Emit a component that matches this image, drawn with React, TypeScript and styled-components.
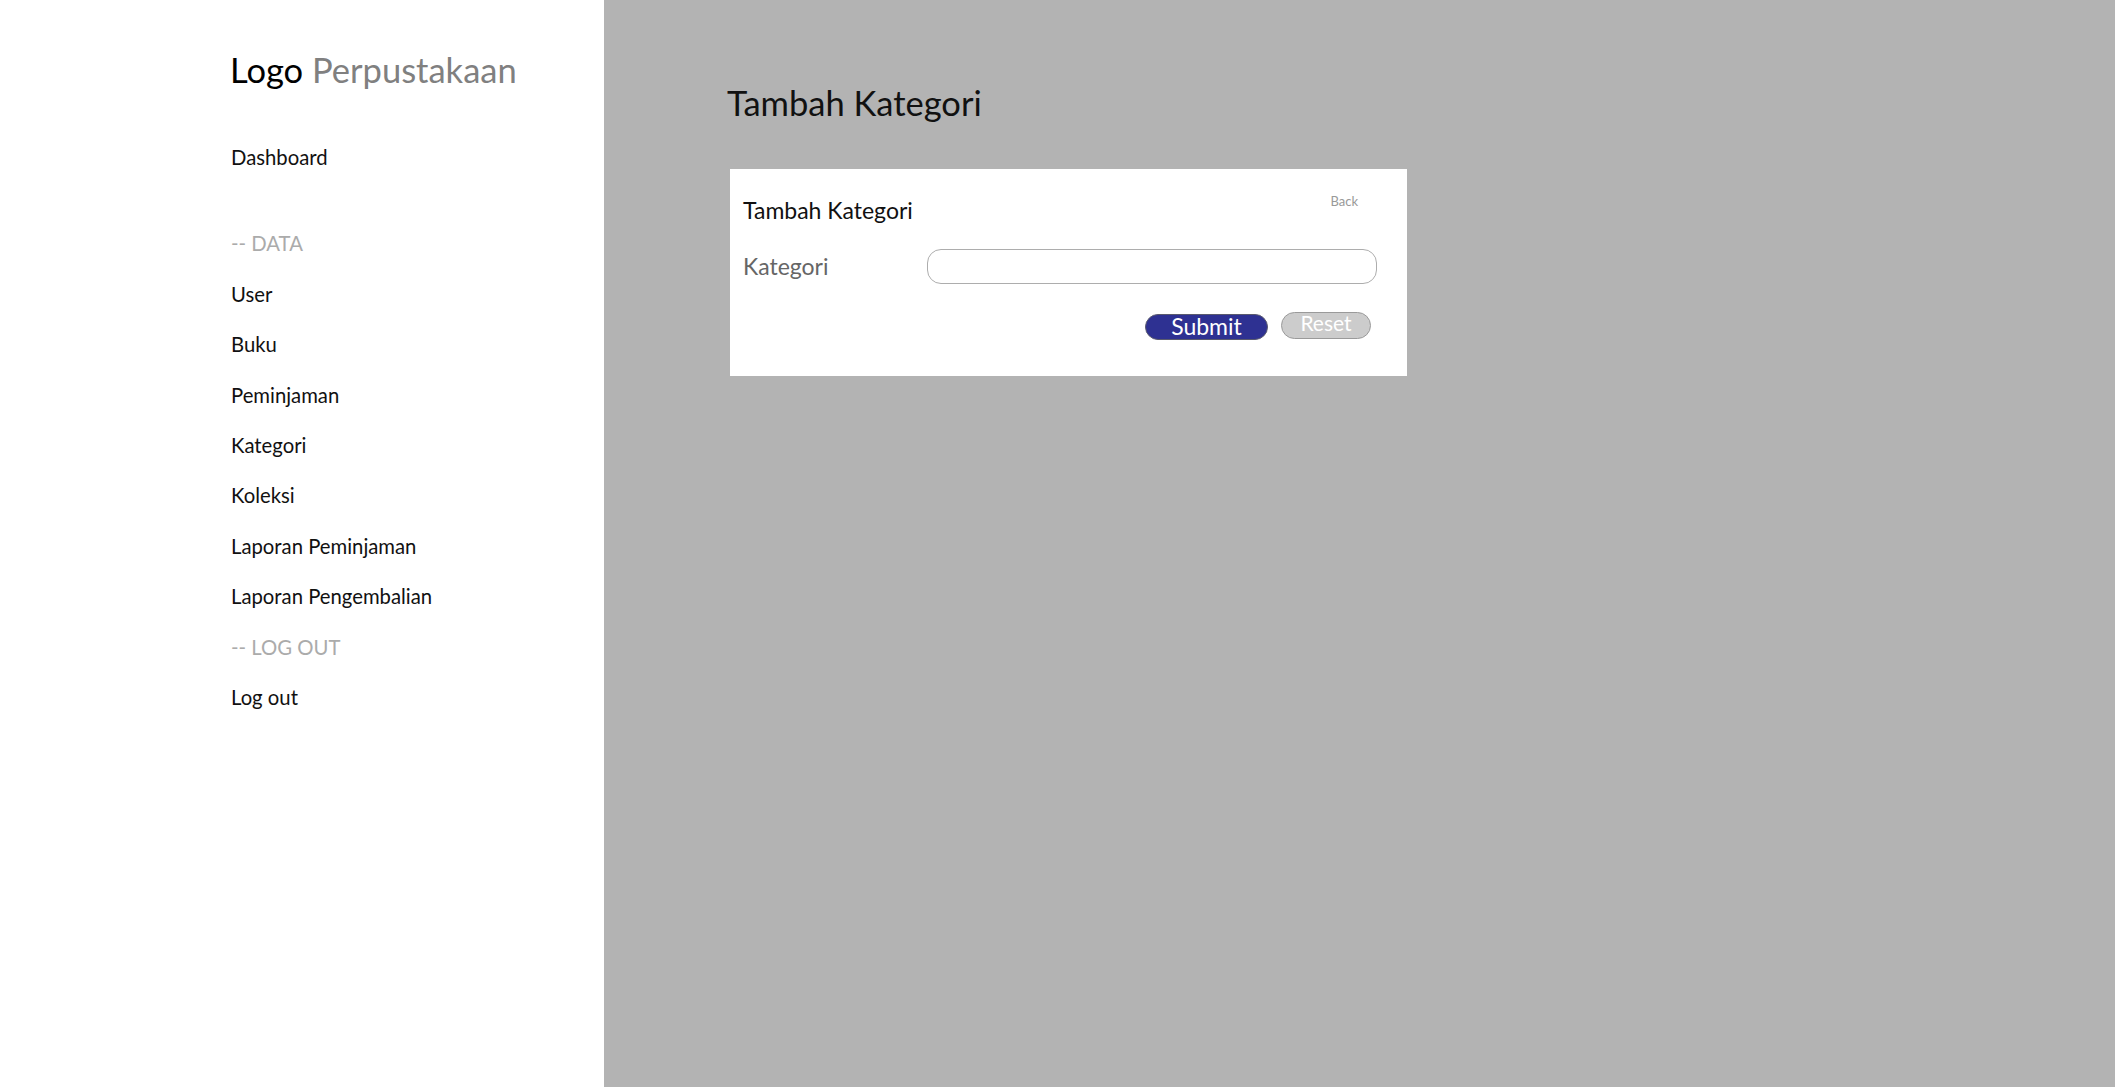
import React from "react";
import styled, { createGlobalStyle } from "styled-components";

const GlobalStyle = createGlobalStyle`
  html, body {
    margin: 0;
    padding: 0;
  }
  body {
    font-family: Lato, "Open Sans", sans-serif;
    color: #111;
  }
  * {
    box-sizing: border-box;
  }
`;

const Layout = styled.div`
  display: flex;
  min-height: 100vh;
`;

const Sidebar = styled.aside`
  width: 604px;
  flex: none;
  background: #fff;
  padding: 50px 0 0 231px;
  display: flex;
  flex-direction: column;
`;

const Logo = styled.div`
  font-size: 34.5px;
  line-height: 1.2;
  color: #000;
  margin: -1px 0 55px -1px;
  white-space: nowrap;

  span {
    color: #808080;
  }
`;

const NavList = styled.nav`
  display: flex;
  flex-direction: column;
  gap: 26.4px;
`;

const NavItem = styled.a<{ $spaced?: boolean }>`
  display: block;
  font-size: 20.3px;
  line-height: 24px;
  color: #111;
  text-decoration: none;
  cursor: pointer;
  margin-bottom: ${(p) => (p.$spaced ? "35.6px" : "0")};
`;

const NavHeading = styled.div`
  font-size: 20.3px;
  line-height: 24px;
  color: #ababab;
`;

const Main = styled.main`
  flex: 1;
  background: #b3b3b3;
  padding: 82px 0 0 123px;
`;

const PageTitle = styled.h1`
  margin: 0 0 46px;
  font-size: 34.5px;
  line-height: 1.2;
  font-weight: 400;
  color: #111;
`;

const Card = styled.section`
  width: 677px;
  height: 207px;
  margin-left: 3px;
  background: #fff;
  padding: 25px 30px 0 13px;
`;

const CardHeader = styled.div`
  display: flex;
  justify-content: space-between;
  align-items: flex-start;
`;

const CardTitle = styled.h2`
  margin: 3px 0 0;
  font-size: 23px;
  line-height: 1.2;
  font-weight: 400;
  color: #111;
`;

const BackLink = styled.a`
  font-size: 13px;
  line-height: 1.2;
  color: #999;
  margin-right: 19px;
  text-decoration: none;
  cursor: pointer;
`;

const FieldRow = styled.div`
  display: flex;
  align-items: center;
  margin-top: 24px;
`;

const Label = styled.label`
  width: 184px;
  flex: none;
  font-size: 23px;
  line-height: 1.2;
  color: #666;
`;

const TextInput = styled.input`
  width: 450px;
  height: 35px;
  flex: none;
  border: 1px solid #adadad;
  border-radius: 14px;
  background: #fff;
  outline: none;
  padding: 0 12px;
  font-family: inherit;
  font-size: 18px;
`;

const Actions = styled.div`
  display: flex;
  justify-content: flex-end;
  align-items: flex-start;
  gap: 13px;
  margin-top: 28px;
  margin-right: 6px;
`;

const Button = styled.button<{ $variant: "primary" | "muted" }>`
  font-family: inherit;
  color: #fff;
  cursor: pointer;
  text-align: center;
  border-radius: 14px;
  ${(p) =>
    p.$variant === "primary"
      ? `
    width: 123px;
    height: 26px;
    margin-top: 2px;
    background: #2e3192;
    border: 1px solid #5a5a6e;
    font-size: 23px;
    line-height: 22px;
    padding: 0 0 2px;
  `
      : `
    width: 90px;
    height: 27px;
    background: #cccccc;
    border: 1px solid #9a9a9a;
    font-size: 21px;
    line-height: 20px;
    padding: 0 0 5px;
  `}
`;

const navItems = [
  "User",
  "Buku",
  "Peminjaman",
  "Kategori",
  "Koleksi",
  "Laporan Peminjaman",
  "Laporan Pengembalian",
];

const App: React.FC = () => {
  return (
    <Layout>
      <GlobalStyle />
      <Sidebar>
        <Logo>
          Logo <span>Perpustakaan</span>
        </Logo>
        <NavList>
          <NavItem $spaced>Dashboard</NavItem>
          <NavHeading>-- DATA</NavHeading>
          {navItems.map((item) => (
            <NavItem key={item}>{item}</NavItem>
          ))}
          <NavHeading>-- LOG OUT</NavHeading>
          <NavItem>Log out</NavItem>
        </NavList>
      </Sidebar>
      <Main>
        <PageTitle>Tambah Kategori</PageTitle>
        <Card>
          <CardHeader>
            <CardTitle>Tambah Kategori</CardTitle>
            <BackLink>Back</BackLink>
          </CardHeader>
          <FieldRow>
            <Label htmlFor='kategori'>Kategori</Label>
            <TextInput id='kategori' type='text' />
          </FieldRow>
          <Actions>
            <Button $variant='primary'>Submit</Button>
            <Button $variant='muted'>Reset</Button>
          </Actions>
        </Card>
      </Main>
    </Layout>
  );
};

export default App;
